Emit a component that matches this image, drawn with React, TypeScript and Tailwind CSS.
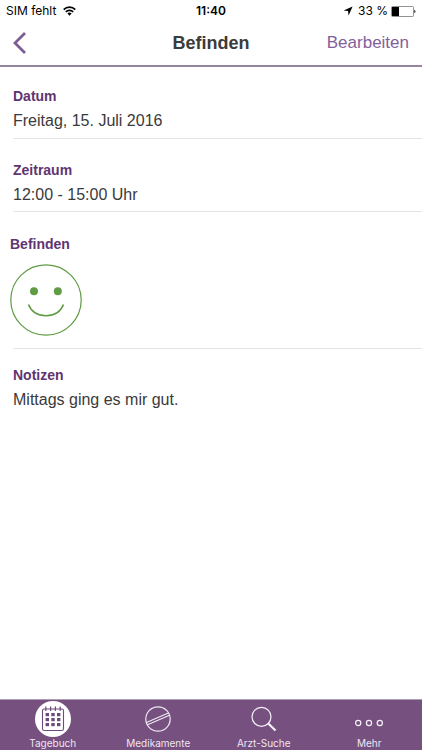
import React from 'react';

const LABEL = 'text-sm leading-5 font-bold text-[#5f3470]';
const VALUE = 'mt-[3px] text-base leading-6 text-[#3a3a3a]';

function StatusBar() {
  return (
    <div className="grid h-5 grid-cols-3 items-center px-[6px] pt-[2px] font-['Inter',sans-serif] text-xs leading-4 text-black">
      <div className="flex items-center gap-[7px]">
        <span>SIM fehlt</span>
        <svg width="13" height="10" viewBox="0 0 13 10" fill="none" stroke="#000" strokeWidth="1.7" aria-hidden="true">
          <path d="M0.7 3.6a8.2 8.2 0 0 1 11.6 0" />
          <path d="M2.8 5.9a5.2 5.2 0 0 1 7.4 0" />
          <path d="M4.4 7.6a3 3 0 0 1 4.2 0L6.5 9.8z" fill="#000" stroke="none" />
        </svg>
      </div>
      <span className="text-center font-semibold">11:40</span>
      <div className="flex items-center justify-end">
        <svg className="mr-[5px]" width="10" height="10" viewBox="0 0 10 10" aria-hidden="true">
          <path d="M9.6 0.4L5.6 9.4L5 5L0.6 4.5z" fill="#000" />
        </svg>
        <span className="mr-[3px] whitespace-nowrap">33 %</span>
        <svg width="25" height="11" viewBox="0 0 25 11" aria-hidden="true">
          <rect x="0.5" y="0.5" width="22" height="10" rx="1" fill="none" stroke="#777" strokeWidth="0.8" />
          <rect x="1" y="1" width="7" height="9" fill="#000" />
          <path d="M23.4 3.8c1.4 0.6 1.4 2.8 0 3.4z" fill="#000" />
        </svg>
      </div>
    </div>
  );
}

function Header() {
  return (
    <header className="grid h-[47px] grid-cols-[1fr_auto_1fr] items-center border-b-2 border-[#95859f] px-[13px]">
      <button type="button" aria-label="Zurück" className="justify-self-start">
        <svg width="13" height="22" viewBox="0 0 13 22" fill="none" stroke="#7e5d94" strokeWidth="2.8">
          <path d="M12 1L2 11L12 21" />
        </svg>
      </button>
      <h1 className="text-lg font-bold text-[#3b3b3b]">Befinden</h1>
      <button type="button" className="justify-self-end text-[17px] text-[#82619a]">
        Bearbeiten
      </button>
    </header>
  );
}

function Smiley() {
  return (
    <svg width="72" height="72" viewBox="0 0 72 72" fill="none" stroke="#5f9c43" role="img" aria-label="Gut">
      <circle cx="36" cy="36" r="35.2" strokeWidth="1.2" />
      <circle cx="24" cy="27.3" r="4" fill="#5f9c43" stroke="none" />
      <circle cx="47.8" cy="27.3" r="4" fill="#5f9c43" stroke="none" />
      <path d="M18.5 40.5C21.5 48 28 51.7 36 51.7C44 51.7 50.5 48 53.5 40.5" strokeWidth="1.6" />
    </svg>
  );
}

function CalendarIcon() {
  return (
    <svg width="36" height="36" viewBox="0 0 36 36" fill="none" aria-hidden="true">
      <circle cx="18" cy="18" r="18" fill="#fff" />
      <rect x="7.5" y="8" width="21" height="21.5" rx="1.8" stroke="#6d4a7c" strokeWidth="1.1" />
      <path d="M10.8 5.5v4.500M15.6 5.5v4.5M20.4 5.5v4.5M25.2 5.5v4.5" stroke="#6d4a7c" strokeWidth="1.2" />
      {[12, 17, 22].map((y) =>
        [10.6, 16.3, 22].map((x) => <rect key={`${x}-${y}`} x={x} y={y} width="3.4" height="3.2" fill="#6d4a7c" />)
      )}
    </svg>
  );
}

function PillIcon() {
  return (
    <svg width="36" height="36" viewBox="0 0 36 36" fill="none" stroke="#f1e9f4" strokeWidth="1.2" aria-hidden="true">
      <circle cx="18" cy="18" r="12.2" />
      <path d="M6.5 21.5L28.4 12M7.6 23.8L29.5 14.3" />
    </svg>
  );
}

function SearchIcon() {
  return (
    <svg width="36" height="36" viewBox="0 0 36 36" fill="none" stroke="#f7f1f9" aria-hidden="true">
      <circle cx="15.5" cy="15.8" r="9.5" strokeWidth="1.2" />
      <path d="M22 22.3L29.5 29.5" strokeWidth="2.2" />
    </svg>
  );
}

function MoreIcon() {
  return (
    <svg width="36" height="36" viewBox="0 0 36 36" fill="none" stroke="#f7f1f9" strokeWidth="1.2" aria-hidden="true">
      <circle cx="7.2" cy="22" r="2.6" />
      <circle cx="18" cy="22" r="2.6" />
      <circle cx="28.8" cy="22" r="2.6" />
    </svg>
  );
}

const tabs = [
  { name: 'Tagebuch', icon: <CalendarIcon /> },
  { name: 'Medikamente', icon: <PillIcon /> },
  { name: 'Arzt-Suche', icon: <SearchIcon /> },
  { name: 'Mehr', icon: <MoreIcon /> },
];

function TabBar() {
  return (
    <nav className="grid grid-cols-4 border-t border-[#ab9db2] bg-[#76507f] pt-px font-['Inter',sans-serif]">
      {tabs.map((tab) => (
        <a key={tab.name} href="#" className="flex flex-col items-center text-[10px] leading-[13px] text-[#efe6f2]">
          {tab.icon}
          <span>{tab.name}</span>
        </a>
      ))}
    </nav>
  );
}

export default function App() {
  return (
    <div className="flex min-h-screen flex-col bg-white font-['Liberation_Sans',Arial,sans-serif]">
      <StatusBar />
      <Header />

      <main className="flex-1 pl-[13px]">
        <section className="border-b border-[#e4e4e4] pt-[19px] pb-[5px]">
          <h2 className={LABEL}>Datum</h2>
          <p className={VALUE}>Freitag, 15. Juli 2016</p>
        </section>

        <section className="border-b border-[#e4e4e4] pt-[21px] pb-1">
          <h2 className={LABEL}>Zeitraum</h2>
          <p className={VALUE}>12:00 - 15:00 Uhr</p>
        </section>

        <section className="border-b border-[#e4e4e4] pt-[22px] pb-3">
          <div className="-ml-[3px]">
            <h2 className={`${LABEL} mb-[10px]`}>Befinden</h2>
            <Smiley />
          </div>
        </section>

        <section className="pt-4">
          <h2 className={LABEL}>Notizen</h2>
          <p className={VALUE}>Mittags ging es mir gut.</p>
        </section>
      </main>

      <TabBar />
    </div>
  );
}
